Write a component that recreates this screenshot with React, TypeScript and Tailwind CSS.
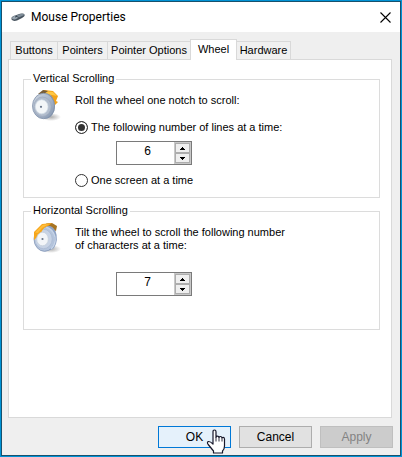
import React, { useState } from 'react';

const tabs = [
  { name: 'Buttons', width: 'w-12' },
  { name: 'Pointers', width: 'w-[51px]' },
  { name: 'Pointer Options', width: 'w-[84px]' },
  { name: 'Wheel', width: 'w-[47px]' },
  { name: 'Hardware', width: 'w-[55px]' },
];

const MouseIcon = () => (
  <svg width="14" height="10" viewBox="0 0 14 10" aria-hidden="true">
    <path d="M.5 6 Q.5 4.5 4 3.5 L9 1.8 Q13 1 13.8 3 Q13.8 4.5 11 6 L6 8.6 Q2 9.6 .5 7.5Z" fill="#46525d" />
    <path d="M.8 5.9 Q1.5 4.6 5 3.6 L7 6 L4 7.4 Q1.4 7.6 .8 5.9Z" fill="#9aa7b2" />
    <path d="M5.5 3.5 L9.5 2 Q12.8 1.4 13.2 3 L7.8 5.6Z" fill="#7f8d99" />
    <path d="M4 5 L6 4.4" stroke="#344450" strokeWidth="1" />
  </svg>
);

const WheelIcon = ({ tilted = false }: { tilted?: boolean }) => (
  <svg width="32" height="32" viewBox="0 0 32 32" aria-hidden="true">
    <defs>
      <linearGradient id={tilted ? 'rimTilt' : 'rim'} x1="0" y1="0" x2="1" y2="1">
        <stop offset="0" stopColor="#d0d9e4" />
        <stop offset=".5" stopColor="#a9b6c9" />
        <stop offset="1" stopColor="#8294ae" />
      </linearGradient>
      <radialGradient id={tilted ? 'shadeTilt' : 'shade'}>
        <stop offset="0" stopColor="#777" stopOpacity=".6" />
        <stop offset="1" stopColor="#777" stopOpacity="0" />
      </radialGradient>
    </defs>
    <ellipse cx="20" cy="27" rx="10" ry="4" fill={tilted ? 'url(#shadeTilt)' : 'url(#shade)'} />
    {tilted ? (
      <>
        <path d="M15 1.5 L21 1 L26 4 L25 9 L18 6Z" fill="#a87422" />
        <path d="M12 5 Q20 1 24.5 9 Q28 18 23 26 Q18 30 12 29 Z" fill="#8fa3c4" />
        <ellipse cx="13.5" cy="17" rx="10.5" ry="12.3" fill="#b4c4dc" stroke="#8497b6" strokeWidth=".8" />
        <path d="M15 5 Q22 7 24 15 Q25 22 20 27" fill="none" stroke="#c6d4e8" strokeWidth="1.4" />
        <ellipse cx="12.5" cy="17" rx="8.7" ry="9.7" fill="#c7d3e5" stroke="#a6b6ce" strokeWidth=".6" />
        <path d="M3 10 L11 2 L21 1 L17 4 Q13 5 11 9 L9 12 L3 18Z" fill="#f6a61c" />
        <path d="M4 10.5 L11.5 3 L18 2 L11 6 L7 11Z" fill="#ffbd3c" />
        <ellipse cx="11.5" cy="17" rx="5.8" ry="6.8" fill="#f2f5f8" stroke="#c4ceda" strokeWidth=".7" />
        <circle cx="11.5" cy="17" r="1.1" fill="#687588" />
      </>
    ) : (
      <>
        <path d="M8 4 L13 0 L22 1 L27 6 L25 11 L27 12 L24 15 L18 10 L10 6Z" fill="#f3a219" />
        <path d="M10 3 L14 1 L22 2 L26 6 L21 5Z" fill="#ffc744" />
        <path d="M7 4 L12 0 L17 1 L13 4Z" fill="#775d38" />
        <ellipse cx="15" cy="16" rx="9" ry="12.5" fill="#7f92ae" />
        <ellipse cx="12.5" cy="16" rx="11" ry="12.7" fill="url(#rim)" stroke="#8192ab" strokeWidth=".8" />
        <ellipse cx="11.5" cy="16.7" rx="8.7" ry="9.7" fill="#b2bdcd" stroke="#98a5b9" strokeWidth=".6" />
        <ellipse cx="10.7" cy="16.8" rx="6.3" ry="7" fill="#f3f6f8" stroke="#d6dfe8" strokeWidth=".7" />
        <circle cx="10" cy="16.8" r="1.1" fill="#677489" />
      </>
    )}
  </svg>
);

interface SpinnerProps {
  label: string;
  value: number;
  onChange: (value: number) => void;
}

const Spinner: React.FC<SpinnerProps> = ({ label, value, onChange }) => (
  <div className="flex h-6 w-[76px] border border-[#7a7a7a] bg-white">
    <input
      aria-label={label}
      className="w-0 flex-1 bg-white pb-1 pl-1 text-center text-[12px] outline-none"
      value={value}
      onChange={(e) => onChange(Number(e.target.value) || 0)}
    />
    <div className="flex w-[17px] flex-col border border-[#c8c8c8] bg-white">
      <button
        aria-label={`Increase ${label}`}
        className="flex flex-1 items-center justify-center border border-[#adadad] bg-[#efefef]"
        onClick={() => onChange(value + 1)}
      >
        <svg width="5" height="3" viewBox="0 0 5 3" shapeRendering="crispEdges"><path d="M2 0h1v1h1v1h1v1H0V2h1V1h1z" /></svg>
      </button>
      <button
        aria-label={`Decrease ${label}`}
        className="flex flex-1 items-center justify-center border border-[#adadad] bg-[#efefef]"
        onClick={() => onChange(Math.max(1, value - 1))}
      >
        <svg width="5" height="3" viewBox="0 0 5 3" shapeRendering="crispEdges"><path d="M0 0h5v1H4v1H3v1H2V2H1V1H0z" /></svg>
      </button>
    </div>
  </div>
);

const radioClass =
  'size-[13px] shrink-0 appearance-none rounded-full border border-[#333] bg-white checked:bg-[#333] checked:shadow-[inset_0_0_0_2px_white]';

export default function App() {
  const [tab, setTab] = useState('Wheel');
  const [mode, setMode] = useState('lines');
  const [lines, setLines] = useState(6);
  const [chars, setChars] = useState(7);

  return (
    <div className="border border-[#0093d6] font-['Liberation_Sans',Arial,sans-serif] text-[11px] leading-[13px] text-black">
      <main className="border border-[#17516d] bg-[#efefef]">
        <header className="flex h-[30px] items-center bg-white pr-[9px] pl-[9px]">
          <MouseIcon />
          <h1 className="ml-[6px] flex-1 font-['Roboto',sans-serif] text-[12px]">Mouse Properties</h1>
          <button aria-label="Close" className="p-0">
            <svg width="11" height="11" viewBox="0 0 11 11" stroke="black" strokeWidth="1.1"><path d="M.5 .5l10 10M10.5 .5l-10 10" /></svg>
          </button>
        </header>

        <div className="px-[6px] pt-[7px]">
          <div role="tablist" className="flex items-end pl-[2px]">
            {tabs.map(({ name, width }) => (
              <button
                key={name}
                role="tab"
                aria-selected={tab === name}
                onClick={() => setTab(name)}
                className={`${width} -mr-px shrink-0 border border-b-0 border-[#d9d9d9] whitespace-nowrap ${
                  tab === name ? 'z-10 -mb-px h-[21px] bg-white pb-[2px]' : 'h-[18px] bg-[#f0f0f0]'
                }`}
              >
                {name}
              </button>
            ))}
          </div>

          <section role="tabpanel" className="mr-[2px] h-[359px] border border-[#d9d9d9] bg-white pt-3 pr-[11px] pl-[14px]">
            <fieldset className="h-[126px] border border-[#dcdcdc] pl-[7px]">
              <legend className="h-[14px] px-[2px]">Vertical Scrolling</legend>
              <div className="flex gap-[12px] pt-1">
                <WheelIcon />
                <div className="pt-1">
                  <p>Roll the wheel one notch to scroll:</p>
                  <label className="mt-[14px] flex items-center gap-[3px]">
                    <input type="radio" name="mode" className={radioClass} checked={mode === 'lines'} onChange={() => setMode('lines')} />
                    The following number of lines at a time:
                  </label>
                  <div className="mt-[7px] ml-[41px]">
                    <Spinner label="Lines" value={lines} onChange={setLines} />
                  </div>
                  <label className="mt-[9px] flex items-center gap-[3px]">
                    <input type="radio" name="mode" className={radioClass} checked={mode === 'screen'} onChange={() => setMode('screen')} />
                    One screen at a time
                  </label>
                </div>
              </div>
            </fieldset>

            <fieldset className="mt-[6px] h-[126px] border border-[#dcdcdc] pl-[7px]">
              <legend className="h-[14px] px-[2px]">Horizontal Scrolling</legend>
              <div className="flex gap-[12px] pt-1">
                <WheelIcon tilted />
                <div className="pt-1">
                  <p>
                    Tilt the wheel to scroll the following number
                    <br />
                    of characters at a time:
                  </p>
                  <div className="mt-[20px] ml-[41px]">
                    <Spinner label="Characters" value={chars} onChange={setChars} />
                  </div>
                </div>
              </div>
            </fieldset>
          </section>

          <footer className="flex justify-end gap-2 pt-2 pr-px pb-[7px] text-[12px]">
            <div className="relative">
              <button className="h-[22px] w-[73px] border border-[#0078d7] bg-[#e5f1fb]">OK</button>
              <svg className="pointer-events-none absolute top-[3px] left-[48px]" width="20" height="25" viewBox="0 0 20 25" aria-hidden="true">
                <path
                  d="M7 15V2.7Q7 1 8.5 1T10 2.7V8.5q0-1.4 1.4-1.4T13 8.5q.3-1 1.5-1T16 9.1q.3-.8 1.3-.8T18.5 10V17q0 3-2 5v2H7.5v-2L2.2 15.5q-1.5-2.2 0-2.9 1.7-.5 4.8 2.4z"
                  fill="white"
                  stroke="#17172a"
                  strokeWidth="1.2"
                  strokeLinejoin="round"
                />
                <path d="M10 8.5v4M13 8.5v4M16 9.5v3" stroke="#17172a" strokeWidth=".9" />
              </svg>
            </div>
            <button className="h-[22px] w-[73px] border border-[#adadad] bg-[#e1e1e1]">Cancel</button>
            <button disabled className="h-[22px] w-[73px] border border-[#bfbfbf] bg-[#cccccc] text-[#838383]">Apply</button>
          </footer>
        </div>
      </main>
    </div>
  );
}
